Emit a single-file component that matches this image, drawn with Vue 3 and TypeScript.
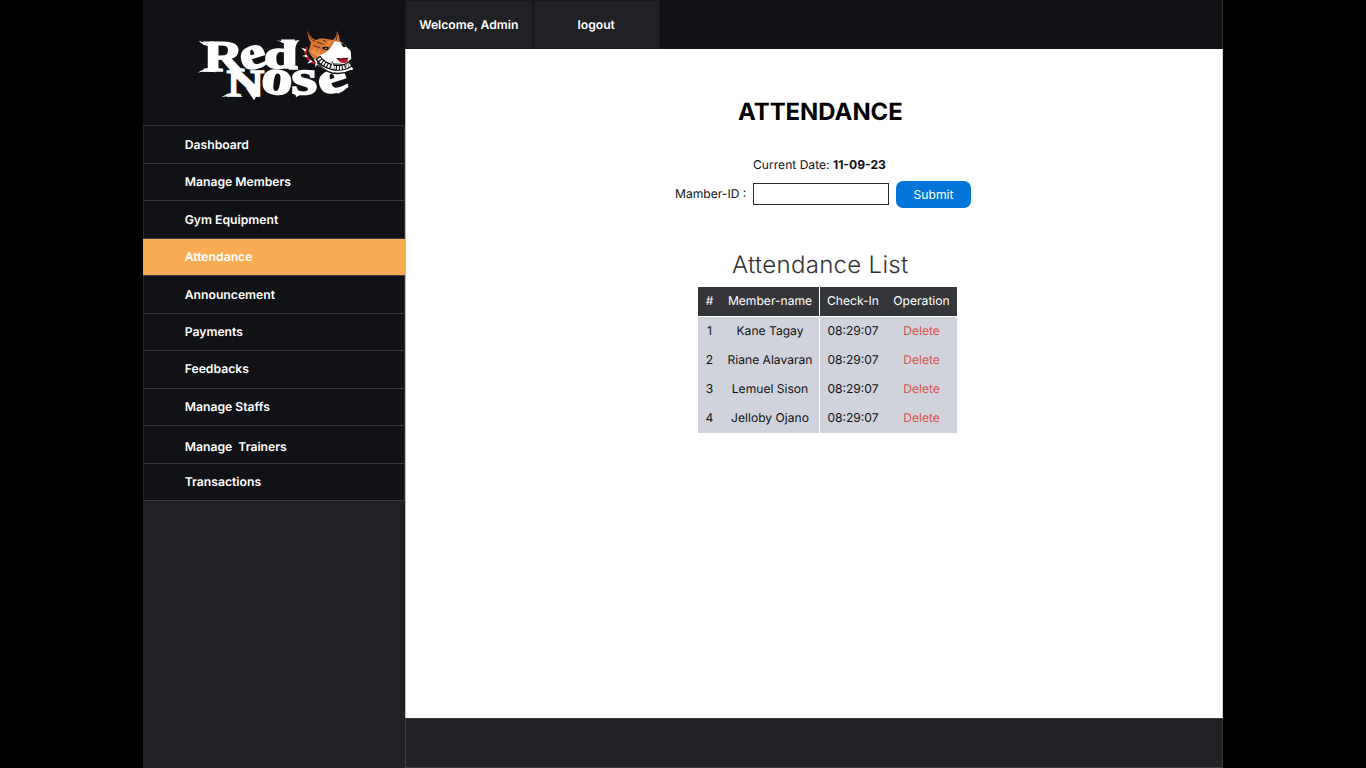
<script setup lang="ts">
interface MenuItem { label: string; shift?: number }
interface Row { id: number; name: string; time: string }

const menu: MenuItem[] = [
  { label: 'Dashboard' },
  { label: 'Manage Members' },
  { label: 'Gym Equipment' },
  { label: 'Attendance' },
  { label: 'Announcement' },
  { label: 'Payments', shift: -1 },
  { label: 'Feedbacks', shift: -1 },
  { label: 'Manage Staffs', shift: -1 },
  { label: 'Manage  Trainers', shift: 1 },
  { label: 'Transactions', shift: -1 },
]
const active = 'Attendance'

const rows: Row[] = [
  { id: 1, name: 'Kane Tagay', time: '08:29:07' },
  { id: 2, name: 'Riane Alavaran', time: '08:29:07' },
  { id: 3, name: 'Lemuel Sison', time: '08:29:07' },
  { id: 4, name: 'Jelloby Ojano', time: '08:29:07' },
]
</script>

<template>
  <div class="shell">
    <aside class="sidebar">
      <div class="brand">
        <svg class="logo" viewBox="0 0 525 270" role="img" aria-label="Red Nose">
          <g class="letters">
            <text x="40" y="153" font-size="132" textLength="120" lengthAdjust="spacingAndGlyphs">R</text>
            <text x="150" y="145" font-size="140" textLength="78" lengthAdjust="spacingAndGlyphs" transform="rotate(-18 190 112)">e</text>
            <text x="222" y="145" font-size="120" textLength="100" lengthAdjust="spacingAndGlyphs">d</text>
            <text x="110" y="228" font-size="114" textLength="112" lengthAdjust="spacingAndGlyphs">N</text>
            <text x="214" y="221" font-size="150" textLength="94" lengthAdjust="spacingAndGlyphs" transform="rotate(8 260 186)">o</text>
            <text x="304" y="221" font-size="150" textLength="78" lengthAdjust="spacingAndGlyphs">s</text>
            <text x="384" y="216" font-size="138" textLength="88" lengthAdjust="spacingAndGlyphs" transform="rotate(-18 430 185)">e</text>
          </g>
          <g fill="#fff">
            <path d="M26 62Q48 72 70 63L66 79Q42 80 26 62ZM23 158Q42 145 66 145L78 157Q46 151 23 158Z" />
            <path d="M258 61Q290 67 329 60Q316 71 316 89V137Q318 145 327 149H296V79Q283 68 258 61Z" />
            <path d="M94 232Q112 218 133 218L160 231Q122 225 94 232ZM168 205L192 241L209 212V195Z" />
            <path d="M314 210L318 232L340 219ZM442 221Q471 213 476 190Q458 211 436 213Z" />
          </g>
          <path d="M352 78Q340 91 345 108Q354 129 383 139L390 127L370 115L358 87Z" fill="#111216" />
          <path d="M351 81Q339 103 358 119Q368 130 384 131" fill="none" stroke="#bd1827" stroke-width="7" />
          <path d="M349 88l-15-5 11 12zM350 104l-14 4 17 4zM361 119l-9 12 16-6zM377 128l-2 14 11-13z" fill="#fff" />
          <path d="M353 32Q361 55 378 60Q391 53 406 56L428 60Q440 54 441 33Q449 45 449 63L466 76L475 94L452 124L397 128L369 115L356 95Q360 77 363 68Q352 52 353 32Z" fill="#d87735" />
          <path d="M353 35Q361 62 375 64M443 40L438 62M370 76L391 84M381 66L407 76M398 60L415 68" fill="none" stroke="#662b17" stroke-width="3" />
          <path d="M362 96L374 84L379 98L391 88L388 107L403 98L394 118ZM408 64L417 74L427 62ZM392 73L409 82L417 76Z" fill="#eb934d" />
          <path d="M434 64Q455 65 466 77L482 93L484 116L465 132L420 130L386 108L408 96L418 89Z" fill="#fff" />
          <path d="M397 82Q407 76 418 83L412 91L398 87ZM452 70Q462 70 468 80L460 82Z" fill="#111216" />
          <path d="M404 83l7 1-3 3z" fill="#fff" />
          <path d="M440 116Q452 118 460 113Q471 112 475 119L468 128Q453 132 447 124Z" fill="#c3172a" />
          <path d="M440 115Q458 121 475 114" fill="none" stroke="#090909" stroke-width="3" />
          <path d="M383 112Q395 134 425 144Q455 153 483 136" fill="none" stroke="#fff" stroke-width="27" />
          <path d="M383 112Q395 132 425 141Q455 149 483 132" fill="none" stroke="#080808" stroke-width="18" />
          <path d="M386 115Q398 133 425 141Q455 149 480 133" fill="none" stroke="#fff" stroke-width="11" stroke-dasharray="6 3" />
          <path d="M422 146l5-23 8 25zM466 147l5-22 7 17z" fill="#fff" stroke="#080808" stroke-width="1.5" />
          <path d="M382 128Q401 153 427 159Q458 164 484 151" fill="none" stroke="#111216" stroke-width="4" />
        </svg>
      </div>
      <nav class="menu">
        <a v-for="m in menu" :key="m.label" class="item" :class="{ active: m.label === active, up: m.shift === -1, down: m.shift === 1 }"><span>{{ m.label }}</span></a>
      </nav>
    </aside>
    <div class="body">
      <header class="topbar">
        <div class="tab">Welcome, Admin</div>
        <div class="tab">logout</div>
      </header>
      <main class="content">
        <h1>ATTENDANCE</h1>
        <p class="date">Current Date: <b>11-09-23</b></p>
        <form class="form" @submit.prevent>
          <label for="member">Mamber-ID :</label>
          <input id="member" type="text" />
          <button type="submit">Submit</button>
        </form>
        <h2>Attendance List</h2>
        <table>
          <colgroup><col class="c1" /><col class="c2" /><col class="c3" /><col class="c4" /></colgroup>
          <thead>
            <tr><th>#</th><th>Member-name</th><th>Check-In</th><th>Operation</th></tr>
          </thead>
          <tbody>
            <tr v-for="r in rows" :key="r.id">
              <td>{{ r.id }}</td><td>{{ r.name }}</td><td>{{ r.time }}</td><td class="delete">Delete</td>
            </tr>
          </tbody>
        </table>
      </main>
      <footer class="footer"></footer>
    </div>
  </div>
</template>

<style>
body { margin: 0; background: #000; overflow: hidden; }
</style>

<style scoped>
* { box-sizing: border-box; }
.shell {
  display: flex;
  width: 1080px;
  height: 768px;
  margin: 0 auto;
  font-family: Inter, "Liberation Sans", sans-serif;
  font-size: 12.1px;
  font-optical-sizing: none;
  text-rendering: geometricPrecision;
  color: #111216;
}
.sidebar { width: 262px; background: #202125; }
.brand { height: 125px; padding: 20px 0 0 47px; background: #111216; }
.logo { display: block; width: 175px; height: 90px; }
.letters { font-family: "Liberation Serif", serif; font-weight: 700; fill: #fff; stroke: #fff; stroke-width: 5px; }
.menu { border-top: 1px solid #303136; border-right: 1px solid #303136; border-left: 1px solid #25262a; }
.item {
  display: flex;
  align-items: center;
  height: 37.5px;
  padding-left: 40.7px;
  border-bottom: 1.5px solid #393a3f;
  background: #111216;
  color: #fff;
  font-size: 12.2px;
  font-weight: 600;
  white-space: pre;
}
.item.active { margin-right: -1px; margin-left: -1px; padding-left: 41.7px; background: #f9ac54; }
.item.up span { margin-top: -1px; }
.item.down span { margin-top: 4px; }
.body { display: flex; flex-direction: column; width: 818px; }
.topbar { display: flex; height: 49px; background: #111216; border-right: 1px solid #35363a; }
.tab {
  display: flex;
  align-items: center;
  justify-content: center;
  width: 127.5px;
  border: 1px solid #18191d;
  background: #202125;
  color: #fff;
  font-size: 12.15px;
  font-weight: 600;
}
.content { flex: 1; background: #fff; border-left: 1px solid #bcbcbe; border-right: 1px solid #d2d2d3; }
h1 { margin: 48px 0 0 332px; font-size: 23.9px; line-height: 30px; font-weight: 700; color: #000; }
.date { margin: 30px 0 0 347px; line-height: 16px; }
.date b { font-weight: 700; }
.form { display: flex; align-items: center; height: 27px; margin: 8px 0 0 269px; }
label { width: 78px; padding-bottom: 2px; }
input { width: 136px; height: 22px; margin-bottom: 1px; padding: 0 4px; border: 1px solid #27282b; border-radius: 0; background: #fff; outline: 0; }
button { width: 75px; height: 27px; margin-left: 7px; padding: 0; border: 0; border-radius: 7px; background: #0275d8; color: #fff; font: inherit; }
h2 { margin: 42px 0 0 326px; font-size: 24px; line-height: 30px; font-weight: 340; letter-spacing: 0.3px; color: #323338; }
table { width: 259px; margin: 7px 0 0 292px; table-layout: fixed; border-collapse: separate; border-spacing: 0; text-align: center; }
.c1 { width: 23px; }
.c2 { width: 99px; }
.c3 { width: 66px; }
.c4 { width: 71px; }
th, td { height: 29px; padding: 0 0 1px; line-height: 16px; white-space: nowrap; }
th { height: 30px; background: #35363a; color: #fff; font-weight: 400; border-bottom: 1px solid #fff; }
td { background: #d0d3db; }
th:nth-child(2), td:nth-child(2) { border-right: 1px solid #fff; }
.delete { color: #d9534f; }
.footer { height: 50px; background: #202125; border: 1px solid #3c3d40; }
</style>
